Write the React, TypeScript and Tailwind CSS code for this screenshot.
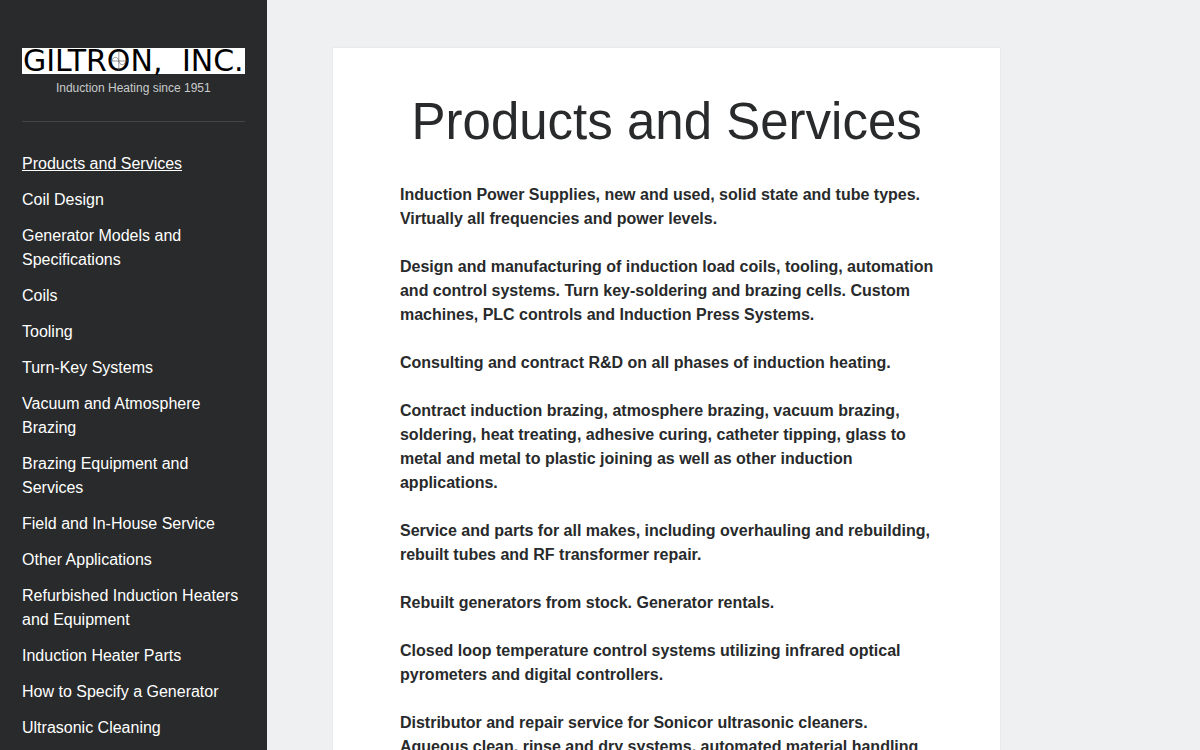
const navItems = [
  'Products and Services',
  'Coil Design',
  'Generator Models and Specifications',
  'Coils',
  'Tooling',
  'Turn-Key Systems',
  'Vacuum and Atmosphere Brazing',
  'Brazing Equipment and Services',
  'Field and In-House Service',
  'Other Applications',
  'Refurbished Induction Heaters and Equipment',
  'Induction Heater Parts',
  'How to Specify a Generator',
  'Ultrasonic Cleaning',
];

const paragraphs = [
  'Induction Power Supplies, new and used, solid state and tube types. Virtually all frequencies and power levels.',
  'Design and manufacturing of induction load coils, tooling, automation and control systems. Turn key-soldering and brazing cells. Custom machines, PLC controls and Induction Press Systems.',
  'Consulting and contract R&D on all phases of induction heating.',
  'Contract induction brazing, atmosphere brazing, vacuum brazing, soldering, heat treating, adhesive curing, catheter tipping, glass to metal and metal to plastic joining as well as other induction applications.',
  'Service and parts for all makes, including overhauling and rebuilding, rebuilt tubes and RF transformer repair.',
  'Rebuilt generators from stock. Generator rentals.',
  'Closed loop temperature control systems utilizing infrared optical pyrometers and digital controllers.',
  'Distributor and repair service for Sonicor ultrasonic cleaners. Aqueous clean, rinse and dry systems, automated material handling',
];

function Logo() {
  return (
    <a
      href="#home"
      className="flex h-[26px] items-center justify-between bg-white px-px font-['DejaVu_Sans',sans-serif] text-[30px] leading-[26px] whitespace-nowrap text-black"
    >
      <span>
        GILTR
        <span className="relative inline-block">
          O
          {/* Oscilloscope cross and sine wave inside the O */}
          <svg
            viewBox="0 0 24 26"
            className="absolute inset-0 h-full w-full"
            fill="none"
            stroke="#666666"
            strokeWidth="0.7"
            aria-hidden="true"
          >
            <path d="M12 3v20M3 13h18" />
            <path d="M5 13C6 8 11 8 12 13s6 5 7 0" />
          </svg>
        </span>
        N,
      </span>{' '}
      <span>INC.</span>
    </a>
  );
}

function Sidebar() {
  return (
    <aside className="w-2/9 shrink-0 bg-[#282a2b] px-[22px] pt-12">
      <header className="border-b border-[#434546] pb-[23px]">
        <Logo />
        <p className="mt-1 text-center text-xs leading-5 text-[#c8cacb]">
          Induction Heating since 1951
        </p>
      </header>
      <nav className="pt-[30px] pb-12">
        <ul className="space-y-3">
          {navItems.map((item, i) => (
            <li key={item}>
              <a
                href="#"
                aria-current={i === 0 ? 'page' : undefined}
                className="block text-base text-white hover:underline aria-[current=page]:underline"
              >
                {item}
              </a>
            </li>
          ))}
        </ul>
      </nav>
    </aside>
  );
}

export default function App() {
  return (
    <div className="flex h-screen overflow-hidden bg-[#eff0f2] font-['Liberation_Sans',Arial,sans-serif]">
      <Sidebar />
      <main className="grid min-w-0 flex-1 grid-cols-14 pt-12">
        <article className="col-span-10 col-start-2 bg-white px-[10%] py-12 text-[#282a2b] shadow-[0_0_2px_rgba(0,0,0,0.08)]">
          <h1 className="text-center text-[51px] leading-[51px]">
            Products and Services
          </h1>
          <div className="mt-9 space-y-6 text-base font-bold">
            {paragraphs.map((text) => (
              <p key={text}>{text}</p>
            ))}
          </div>
        </article>
      </main>
    </div>
  );
}
